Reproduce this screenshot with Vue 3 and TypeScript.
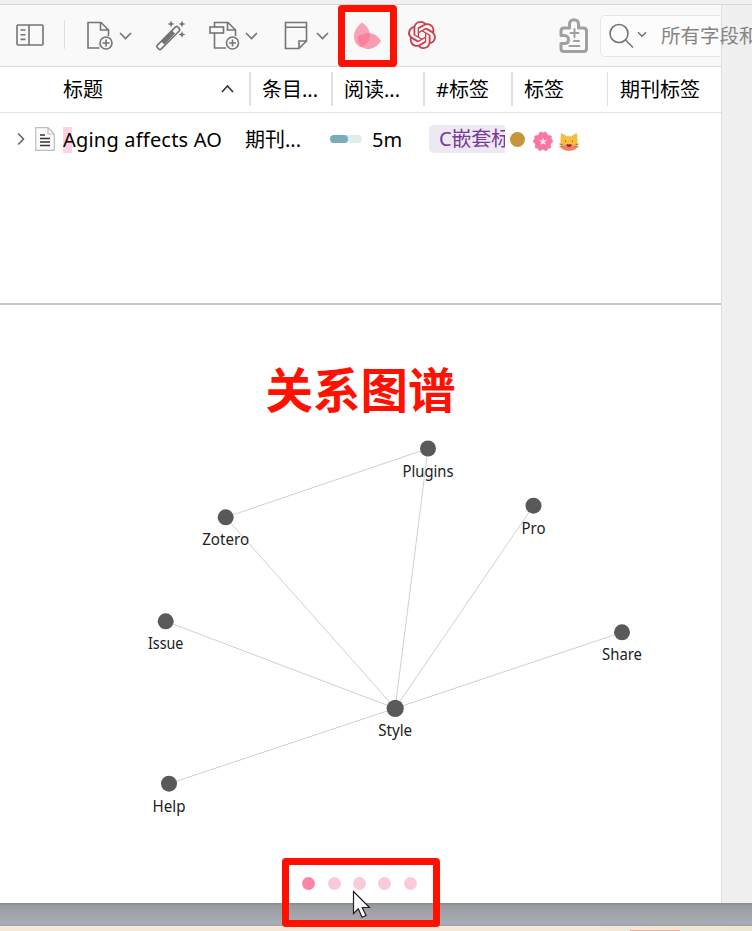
<script setup lang="ts">
interface GraphNode {
  id: string
  x: number
  y: number
  r: number
}

const nodes: GraphNode[] = [
  { id: 'Plugins', x: 428, y: 448.5, r: 8 },
  { id: 'Pro', x: 533.5, y: 505.7, r: 8 },
  { id: 'Zotero', x: 225.7, y: 517.3, r: 8 },
  { id: 'Issue', x: 165.7, y: 621.3, r: 8 },
  { id: 'Share', x: 622, y: 632.3, r: 8 },
  { id: 'Style', x: 395.2, y: 708.3, r: 8.6 },
  { id: 'Help', x: 169, y: 783.7, r: 8 },
]

const widths: Record<string, number> = {
  Plugins: 51, Pro: 24, Zotero: 47, Issue: 35.5, Share: 40, Style: 34, Help: 33,
}

const links: [string, string][] = [
  ['Zotero', 'Plugins'],
  ['Zotero', 'Style'],
  ['Plugins', 'Style'],
  ['Pro', 'Style'],
  ['Issue', 'Style'],
  ['Share', 'Style'],
  ['Help', 'Style'],
]

const at = (id: string): GraphNode => nodes.find((n) => n.id === id)!
const edges = links.map(([a, b]) => ({ key: a + b, from: at(a), to: at(b) }))

const columns = ['条目...', '阅读...', '#标签', '标签', '期刊标签']
const pages = [0, 1, 2, 3, 4]
const petals = [0, 72, 144, 216, 288]
</script>

<template>
  <div class="window">
    <div class="top-strip"></div>
    <div class="shell">
      <main class="pane">
        <header class="toolbar">
          <svg class="i-panel" width="28" height="22" viewBox="0 0 28 22">
            <rect x="1" y="1" width="26" height="20" rx="1" />
            <path d="M13 1v20M4.5 6h5M4.5 10.7h5M4.5 15.4h5" />
          </svg>
          <i class="divider"></i>
          <svg class="i-new" width="28" height="30" viewBox="0 0 28 30">
            <path d="M13.500 27H2V1.500H15L22.500 9V15M14.500 1.500V9H22.500" />
            <circle cx="20" cy="22" r="6" /><path d="M20 18.500v7M16.500 22h7" />
          </svg>
          <svg class="chev" width="13" height="8" viewBox="0 0 13 8"><path d="M1 1l5.500 5.500L12 1" /></svg>
          <svg class="i-wand" width="31" height="30" viewBox="0 0 31 30">
            <rect x="-1.500" y="11.800" width="29" height="5.400" rx="1.500" transform="rotate(-45 13 14.500) translate(-3 2)" />
            <path class="fill" d="M5 21.500L16 10.500L19 13.500L8.500 24.500Z" />
            <path class="fill" d="M15 .500l1 2.500 2.500 1-2.500 1-1 2.500-1-2.500-2.500-1 2.500-1ZM26 .500l1 2.500 2.500 1-2.500 1-1 2.500-1-2.500-2.500-1 2.500-1ZM26 11l1 2.500 2.500 1-2.500 1-1 2.500-1-2.500-2.500-1 2.500-1Z" />
          </svg>
          <svg class="i-attach" width="31" height="30" viewBox="0 0 31 30">
            <path d="M5.500 6V1.500H19L26.500 9V15M5.500 12v15H17M18.500 1.500V9H26.500" />
            <rect x="1" y="6" width="13.500" height="6" />
            <circle cx="23.500" cy="22" r="6" /><path d="M23.500 18.500v7M20 22h7" />
          </svg>
          <svg class="chev" width="13" height="8" viewBox="0 0 13 8"><path d="M1 1l5.500 5.500L12 1" /></svg>
          <svg class="i-note" width="25" height="30" viewBox="0 0 25 30">
            <path d="M1.500 1.500H22.500V20L15 27.500H1.500ZM1.500 6.200H22.500M15 27.500V20H22.500" />
          </svg>
          <svg class="chev" width="13" height="8" viewBox="0 0 13 8"><path d="M1 1l5.500 5.500L12 1" /></svg>
          <svg class="i-petal" width="28" height="28" viewBox="0 0 28 28">
            <path class="p1" d="M8 .500C3 4.500 0 9 0 14.500 0 20.500 3.500 24 7 25.200 13 23 16 18.500 16 13.500 16 8 13 4 8 .500Z" />
            <path class="p2" d="M4 14.500C8 11.500 12 11 17 11.500 22 12 25 15.500 27 19 23 25 17.500 27.500 13 27 7 26.500 3.500 21 4 14.500Z" />
          </svg>
          <svg class="i-knot" width="28" height="28" viewBox="0 0 24 24">
            <path d="M22.2819 9.8211a5.9847 5.9847 0 0 0-.5157-4.9108 6.0462 6.0462 0 0 0-6.5098-2.9A6.0651 6.0651 0 0 0 4.9807 4.1818a5.9847 5.9847 0 0 0-3.9977 2.9 6.0462 6.0462 0 0 0 .7427 7.0966 5.98 5.98 0 0 0 .511 4.9107 6.051 6.051 0 0 0 6.5146 2.9001A5.9847 5.9847 0 0 0 13.2599 24a6.0557 6.0557 0 0 0 5.7718-4.2058 5.9894 5.9894 0 0 0 3.9977-2.9001 6.0557 6.0557 0 0 0-.7475-7.0729zm-9.022 12.6081a4.4755 4.4755 0 0 1-2.8764-1.0408l.1419-.0804 4.7783-2.7582a.7948.7948 0 0 0 .3927-.6813v-6.7369l2.02 1.1686a.071.071 0 0 1 .038.052v5.5826a4.504 4.504 0 0 1-4.4945 4.4944zm-9.6607-4.1254a4.4708 4.4708 0 0 1-.5346-3.0137l.142.0852 4.783 2.7582a.7712.7712 0 0 0 .7806 0l5.8428-3.3685v2.3324a.0804.0804 0 0 1-.0332.0615L9.74 19.9502a4.4992 4.4992 0 0 1-6.1408-1.6464zM2.3408 7.8956a4.485 4.485 0 0 1 2.3655-1.9728V11.6a.7664.7664 0 0 0 .3879.6765l5.8144 3.3543-2.0201 1.1685a.0757.0757 0 0 1-.071 0l-4.8303-2.7865A4.504 4.504 0 0 1 2.3408 7.872zm16.5963 3.8558L13.1038 8.364 15.1192 7.2a.0757.0757 0 0 1 .071 0l4.8303 2.7913a4.4944 4.4944 0 0 1-.6765 8.1042v-5.6772a.79.79 0 0 0-.407-.667zm2.0107-3.0231l-.142-.0852-4.7735-2.7818a.7759.7759 0 0 0-.7854 0L9.409 9.2297V6.8974a.0662.0662 0 0 1 .0284-.0615l4.8303-2.7866a4.4992 4.4992 0 0 1 6.6802 4.66zM8.3065 12.863l-2.02-1.1638a.0804.0804 0 0 1-.038-.0567V6.0742a4.4992 4.4992 0 0 1 7.3757-3.4537l-.142.0805L8.704 5.459a.7948.7948 0 0 0-.3927.6813zm1.0976-2.3654l2.602-1.4998 2.6069 1.4998v2.9994l-2.5974 1.4997-2.6067-1.4997Z" />
          </svg>
          <svg class="i-puzzle" width="30" height="36" viewBox="0 0 30 36">
            <path d="M5 10H10.500V6C10.500 3.500 12.500 1.800 15 1.800S19.500 3.500 19.500 6V10H24.500Q27.500 10 27.500 13V30.500Q27.500 33.500 24.500 33.500H5Q2 33.500 2 30.500V25.500H5.500C8.500 25.500 9.500 23.500 9.500 21.500S8 17.500 5.500 17.500H2V13Q2 10 5 10Z" />
            <path d="M15.500 11v8M11.500 15h8M15 23h5M10.500 28h10" class="thin" />
          </svg>
          <div class="search">
            <svg width="25" height="26" viewBox="0 0 25 26"><circle cx="10" cy="10.500" r="9" /><path d="M16.500 17l7.500 7.500" /></svg>
            <svg class="caret" width="10" height="7" viewBox="0 0 10 7"><path d="M1 1.200l4 4 4-4" /></svg>
            <span>所有字段和</span>
          </div>
        </header>

        <div class="columns">
          <div class="col first">
            <span>标题</span>
            <svg width="13" height="9" viewBox="0 0 13 9"><path d="M1 8l5.500-6L12 8" /></svg>
          </div>
          <div v-for="c in columns" :key="c" class="col"><i></i><span>{{ c }}</span></div>
        </div>

        <div class="items">
          <div class="item">
            <svg class="twisty" width="8" height="14" viewBox="0 0 8 14"><path d="M1.200 1.500L6.500 7 1.200 12.500" /></svg>
            <svg class="doc" width="20" height="24" viewBox="0 0 20 24">
              <path class="sheet" d="M.700.700H13L19.300 7V23.300H.700ZM13 .700V7H19.300" />
              <path class="lines" d="M5 8h5M5 11.500h10M5 15h10M5 18.500h10" />
            </svg>
            <span class="title">Aging affects AO</span>
            <span class="type">期刊...</span>
            <span class="bar"><b></b></span>
            <span class="mins">5m</span>
            <span class="tag">C嵌套标</span>
            <i class="dot"></i>
            <svg class="flower" width="20" height="20" viewBox="0 0 20 20">
              <g v-for="a in petals" :key="a" :transform="`rotate(${a} 10 10.500)`">
                <path class="petal" d="M10 11C4.500 7.500 4.500 3.500 7.500 .800L10 1.800 12.500 .800C15.500 3.500 15.500 7.500 10 11Z" />
              </g>
              <path class="heart" d="M10 6.300l1 3 3-.300-2.300 2 1.300 3-3-1.600-3 1.600 1.300-3L6 9l3 .300Z" />
            </svg>
            <svg class="cat" width="20" height="20" viewBox="0 0 20 20">
              <path class="face" d="M2 1.200Q5 1.500 7.500 4.200H12.500Q15 1.500 18 1.200Q18.500 6 18.500 10Q19.500 18.500 10 18.500T1.500 10Q1.500 6 2 1.200Z" />
              <ellipse class="blush" cx="10" cy="15.700" rx="7.500" ry="3" />
              <path class="mouth" d="M7.500 12Q10 12.800 12.500 12Q12.500 15 10 15T7.500 12Z" />
              <path class="whisk" d="M.500 12l3 .600M.500 15l3-.500M19.500 12l-3 .600M19.500 15l-3-.500M6.500 8.500v1.500M13.500 8.500v1.500" />
            </svg>
          </div>
        </div>

        <section class="graph">
          <h1>关系图谱</h1>
          <svg class="canvas" width="721" height="420" viewBox="0 420 721 420">
            <line v-for="e in edges" :key="e.key" :x1="e.from.x" :y1="e.from.y" :x2="e.to.x" :y2="e.to.y" />
            <g v-for="n in nodes" :key="n.id">
              <circle :cx="n.x" :cy="n.y" :r="n.r" />
              <text :x="n.x" :y="n.y + 28" text-anchor="middle" :textLength="widths[n.id]" lengthAdjust="spacingAndGlyphs">{{ n.id }}</text>
            </g>
          </svg>
          <nav class="pager"><i v-for="p in pages" :key="p" :class="{ on: p === 0 }"></i></nav>
        </section>
      </main>
      <aside class="side"></aside>
    </div>
    <footer class="desk"></footer>
    <div class="under"><i></i></div>

    <div class="mark mark-top"></div>
    <div class="mark mark-bottom"></div>
    <svg class="cursor" width="20" height="29" viewBox="0 0 20 29">
      <path d="M1.500 1.500V23.500L6.300 18.800 10 27.200 14 25.500 10.300 17.500H17.500Z" />
    </svg>
  </div>
</template>

<style>
body { margin: 0; overflow: hidden; }
</style>

<style scoped>
.window {
  position: relative;
  width: 752px;
  height: 931px;
  overflow: hidden;
  display: flex;
  flex-direction: column;
  background: #f0f0f0;
  color: #000;
  font: 20px/26px "Noto Sans", "Noto Sans CJK SC", sans-serif;
}
svg { display: block; flex: none; fill: none; stroke: #747474; stroke-width: 1.600; overflow: visible; }
i { display: block; flex: none; }
.top-strip { flex: none; height: 4px; background: #f0f0f0; border-bottom: 1px solid #d8d8d8; }
.shell { flex: none; height: 898px; display: flex; }
.pane { width: 721px; flex: none; display: flex; flex-direction: column; background: #fff; position: relative; z-index: 1; }
.side { flex: 1; border-left: 1px solid #dedede; background: #f0f0f0; }

.toolbar { flex: none; height: 61px; background: #f9f9f9; border-bottom: 1px solid #d9d9d9; display: flex; align-items: center; white-space: nowrap; }
.i-panel { margin-left: 16px; margin-top: -1px; }
.divider { width: 1px; height: 29px; background: #e0e0e0; margin-left: 20px; margin-top: -2px; }
.i-new { margin-left: 21px; }
.chev { margin-left: 5px; }
.i-wand { margin-left: 24px; margin-top: -2px; }
.i-wand .fill { fill: #747474; stroke: none; }
.i-attach { margin-left: 22px; }
.i-note { margin-left: 26px; }
.i-note + .chev { margin-left: 7px; }
.i-petal { margin-left: 25px; margin-top: 1px; stroke: none; }
.p1 { fill: #fc8faa; fill-opacity: .82; }
.p2 { fill: #f9728f; fill-opacity: .68; }
.i-knot { margin-left: 26px; margin-top: -1px; fill: #cb3f4c; stroke: none; }
.i-puzzle { margin-left: 123px; stroke: #a0a0a0; stroke-width: 3; stroke-linejoin: round; stroke-linecap: round; }
.i-puzzle .thin { stroke-width: 2; }
.search { box-sizing: border-box; width: 120px; height: 42px; margin-left: 11px; flex: none; border: 1px solid #e6e6e6; border-right: 0; border-radius: 5px 0 0 5px; background: #fcfcfc; display: flex; align-items: center; padding-left: 8px; color: #858585; }
.search span { margin-left: 14px; font-size: 19.500px; position: relative; z-index: 2; }
.caret { margin-left: 3px; margin-top: -2px; }

.columns { flex: none; height: 45px; border-bottom: 1px solid #e3e3e3; display: grid; grid-template-columns: 249px 82px 92px 88px 96px 1fr; }
.col { display: flex; align-items: center; white-space: nowrap; }
.col i { width: 2px; height: 34px; margin-top: -2px; background: #e0e0e0; }
.col:last-child i { width: 1px; margin-right: 1px; }
.col i + span { margin-left: 11px; }
.first { padding: 0 15px 0 63px; justify-content: space-between; }
.first svg { stroke: #333; margin-top: -2px; }

.items { flex: none; height: 190px; border-bottom: 2px solid #c6c6c6; }
.item { height: 53px; display: flex; align-items: center; white-space: nowrap; }
.twisty { margin-left: 17px; margin-top: -2px; stroke: #666; }
.doc { margin-left: 10px; margin-top: -1px; }
.sheet { fill: #fafafa; stroke: #bdbdbd; stroke-width: 1.200; }
.lines { stroke: #333; }
.title { width: 159px; margin-left: 8px; background: linear-gradient(#ffd2df, #ffd2df) no-repeat 0 0 / 9px 26px; letter-spacing: .2px; }
.type { margin-left: 23px; width: 55px; }
.bar { width: 32px; height: 8px; border-radius: 4px; margin-left: 30px; margin-top: -1px; background: #e0eded; }
.bar b { display: block; width: 18px; height: 8px; border-radius: 4px; background: #78aeb8; }
.mins { margin-left: 10px; width: 30px; }
.tag { box-sizing: border-box; margin-left: 27px; margin-top: -1px; width: 76px; height: 28px; line-height: 28px; padding-left: 10px; overflow: hidden; border-radius: 5px 0 0 5px; background: #eee8f3; color: #743b99; letter-spacing: -.2px; }
.dot { width: 15px; height: 15px; border-radius: 50%; background: #c5963b; margin-left: 5px; }
.flower { margin-left: 8px; margin-top: 2px; stroke: none; }
.petal { fill: #fa78a1; stroke: #e85f8b; stroke-width: .3; }
.heart { fill: #ffe4ed; }
.cat { margin-left: 6px; margin-top: 4px; stroke: none; }
.face { fill: #f6bd3e; }
.blush { fill: #f77c62; }
.mouth { fill: #782e39; }
.whisk { stroke: #8a5a34; stroke-width: .9; }

.graph { flex: 1; display: flex; flex-direction: column; align-items: center; }
h1 { margin: 48px 0 0; height: 67px; line-height: 70px; font-size: 47.500px; font-weight: 700; font-family: "Noto Sans CJK SC", sans-serif; color: #fe1100; }
.canvas line { stroke: #d0d0d0; stroke-width: 1; }
.canvas circle { fill: #595959; stroke: none; }
.canvas text { fill: #222; stroke: none; font-size: 15.500px; }
.pager { display: flex; gap: 12.400px; margin-top: 37px; margin-right: 2px; }
.pager i { width: 13px; height: 13px; border-radius: 50%; background: #facadc; }
.pager .on { background: #fd86a4; }

.desk { flex: none; height: 23px; background: linear-gradient(#88898b, #9b9da0 3px, #a1a5aa 12px, #a8acb5 20px, #a2a2a2); }
.under { flex: 1; background: linear-gradient(90deg, #f5e7da 0 600px, #ebe7d2); display: flex; align-items: flex-end; }
.under i { width: 50px; height: 1px; margin-left: 630px; background: #f5a99d; }

.mark { position: absolute; box-sizing: border-box; border: 7px solid #fe1100; border-radius: 4px; z-index: 3; }
.mark-top { left: 338px; top: 5px; width: 59px; height: 62px; }
.mark-bottom { left: 282px; top: 858px; width: 158px; height: 69px; }
.cursor { position: absolute; left: 352px; top: 890px; z-index: 4; fill: #fff; stroke: #1d1d22; stroke-width: 1.200; }
</style>
